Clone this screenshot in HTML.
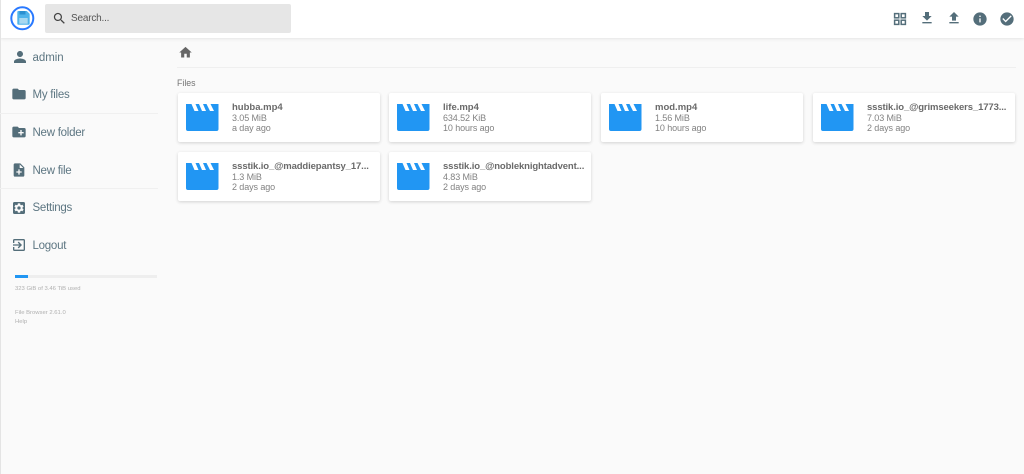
<!DOCTYPE html>
<html><head><meta charset="utf-8"><style>
*{box-sizing:border-box;margin:0;padding:0}
html,body{width:1024px;height:474px;overflow:hidden;background:#fafafa;font-family:"Liberation Sans",sans-serif}
#w{position:absolute;left:0;top:0;width:1024px;height:474px;background:#fafafa;filter:blur(.35px)}
.abs{position:absolute}
#top{left:0;top:0;width:1024px;height:38px;background:#fff;box-shadow:0 0 4px rgba(0,0,0,.14)}
#edge{left:0;top:0;width:1px;height:474px;background:#e4e4e4}
#search{left:45px;top:4px;width:246px;height:29px;background:#e6e6e6;border-radius:2px}
#stxt{left:71px;top:12px;font-size:10px;line-height:13px;color:#555;letter-spacing:-.2px}
.nav{left:32.5px;font-size:11.5px;line-height:14px;color:#5d7682;letter-spacing:-.25px;white-space:nowrap}
.hr{left:0;width:158px;height:1px;background:#f0f0f0}
.card{position:absolute;width:202px;height:49px;background:#fff;border-radius:2px;box-shadow:0 1px 3px rgba(0,0,0,.16)}
.card svg{position:absolute;left:8px;top:11px}
.n{position:absolute;left:54px;top:8.5px;font-size:9.5px;line-height:12px;font-weight:bold;color:#6a6a6a;white-space:nowrap}
.l{letter-spacing:-.12px}
.s,.d{position:absolute;left:54px;font-size:9px;line-height:11px;color:#828282;white-space:nowrap;letter-spacing:-.1px}
.s{top:19.5px}.d{top:30px}
.tiny{font-size:5.9px;line-height:8px;color:#b0b0b0;white-space:nowrap}
svg{display:block}
</style></head><body><div id="w">
<div class="abs" id="top"></div>
<div class="abs" id="edge"></div>

<svg class="abs" style="left:10px;top:6px" width="25" height="25" viewBox="0 0 25 25">
<circle cx="12.3" cy="12.3" r="11" fill="#fff" stroke="#2979ff" stroke-width="2"/>
<path d="M7.3 6a1 1 0 0 1 1-1h8.5l2.900 2.900v9.800a1 1 0 0 1-1 1H8.300a1 1 0 0 1-1-1z" fill="#4fb3ea"/>
<rect x="9.5" y="5" width="6" height="3.5" fill="#2a8fd0"/>
<rect x="9.3" y="12" width="8.4" height="5.7" fill="#a8d8f0"/>
</svg>

<div class="abs" id="search"></div>
<svg class="abs" style="left:51.5px;top:10.5px" width="15" height="15" viewBox="0 0 24 24"><path fill="#444" d="M15.5 14h-.79l-.28-.27C15.41 12.59 16 11.11 16 9.5 16 5.91 13.09 3 9.5 3S3 5.91 3 9.500 5.910 16 9.500 16c1.610 0 3.090-.59 4.230-1.570l.27.28v.79l5 4.990L20.490 19l-4.990-5zm-6 0C7.010 14 5 11.990 5 9.500S7.010 5 9.500 5 14 7.010 14 9.500 11.990 14 9.500 14z"/></svg>
<div class="abs" id="stxt">Search...</div>

<svg class="abs" style="left:893px;top:11.5px" width="14" height="14" viewBox="0 0 14 14"><g fill="none" stroke="#546e7a" stroke-width="1.5"><rect x="1.6" y="1.6" width="4.2" height="4.2"/><rect x="8.2" y="1.6" width="4.2" height="4.2"/><rect x="1.6" y="8.2" width="4.2" height="4.2"/><rect x="8.2" y="8.2" width="4.2" height="4.2"/></g></svg>
<svg class="abs" style="left:919px;top:10px" width="16" height="16" viewBox="0 0 24 24"><path fill="#546e7a" d="M19 9h-4V3H9v6H5l7 7 7-7zM5 18v2h14v-2H5z"/></svg>
<svg class="abs" style="left:946px;top:10px" width="16" height="16" viewBox="0 0 24 24"><path fill="#546e7a" d="M9 16h6v-6h4l-7-7-7 7h4zm-4 2h14v2H5z"/></svg>
<svg class="abs" style="left:972px;top:10.5px" width="16" height="16" viewBox="0 0 24 24"><path fill="#546e7a" d="M12 2C6.48 2 2 6.48 2 12s4.48 10 10 10 10-4.48 10-10S17.52 2 12 2zm1 15h-2v-6h2v6zm0-8h-2V7h2v2z"/></svg>
<svg class="abs" style="left:998.5px;top:10.5px" width="16" height="16" viewBox="0 0 24 24"><path fill="#546e7a" d="M12 2C6.48 2 2 6.48 2 12s4.48 10 10 10 10-4.48 10-10S17.52 2 12 2zm-2 15l-5-5 1.41-1.41L10 14.17l7.59-7.59L19 8l-9 9z"/></svg>

<svg class="abs" style="left:10.5px;top:48px" width="18" height="18" viewBox="0 0 24 24"><path fill="#546e7a" d="M12 12c2.21 0 4-1.79 4-4s-1.79-4-4-4-4 1.79-4 4 1.79 4 4 4zm0 2c-2.67 0-8 1.34-8 4v2h16v-2c0-2.66-5.33-4-8-4z"/></svg>
<div class="abs nav" style="top:50.5px;letter-spacing:-.05px">admin</div>
<svg class="abs" style="left:11px;top:86px" width="16" height="16" viewBox="0 0 24 24"><path fill="#546e7a" d="M10 4H4c-1.1 0-2 .9-2 2v12c0 1.1.9 2 2 2h16c1.1 0 2-.9 2-2V8c0-1.1-.9-2-2-2h-8l-2-2z"/></svg>
<div class="abs nav" style="top:88px">My files</div>
<div class="abs hr" style="top:113px"></div>
<svg class="abs" style="left:11px;top:124px" width="16" height="16" viewBox="0 0 24 24"><path fill="#546e7a" d="M20 6h-8l-2-2H4c-1.11 0-2 .89-2 2v12c0 1.11.89 2 2 2h16c1.11 0 2-.89 2-2V8c0-1.11-.89-2-2-2zm-1 8h-3v3h-2v-3h-3v-2h3V9h2v3h3v2z"/></svg>
<div class="abs nav" style="top:126px">New folder</div>
<svg class="abs" style="left:11px;top:162px" width="16" height="16" viewBox="0 0 24 24"><path fill="#546e7a" d="M14 2H6c-1.1 0-2 .9-2 2v16c0 1.1.9 2 2 2h12c1.1 0 2-.9 2-2V8l-6-6zm2 14h-3v3h-2v-3H8v-2h3v-3h2v3h3v2zm-3-7V3.500L18.500 9H13z"/></svg>
<div class="abs nav" style="top:163.5px">New file</div>
<div class="abs hr" style="top:188px"></div>
<svg class="abs" style="left:11px;top:199.5px" width="16" height="16" viewBox="0 0 24 24"><path fill="#546e7a" d="M12 9.500a2.500 2.500 0 1 0 0 5 2.500 2.500 0 0 0 0-5zM19 3H5c-1.100 0-2 .9-2 2v14c0 1.100.9 2 2 2h14c1.100 0 2-.9 2-2V5c0-1.100-.9-2-2-2zm-1.750 9c0 .23-.02.46-.05.68l1.480 1.160c.13.11.17.3.08.45l-1.400 2.420c-.09.15-.27.21-.43.15l-1.740-.7c-.36.28-.76.51-1.180.69l-.26 1.850c-.03.17-.18.3-.35.3h-2.800c-.17 0-.32-.13-.35-.29l-.26-1.850c-.43-.18-.82-.41-1.180-.69l-1.740.7c-.16.06-.34 0-.43-.15l-1.400-2.420c-.09-.15-.05-.34.08-.45l1.480-1.160c-.03-.23-.05-.46-.05-.69 0-.23.02-.46.05-.68l-1.480-1.160c-.13-.11-.17-.3-.08-.45l1.400-2.420c.09-.15.27-.21.43-.15l1.740.7c.36-.28.76-.51 1.180-.69l.26-1.850c.03-.17.18-.3.35-.3h2.800c.17 0 .32.13.35.29l.26 1.850c.43.18.82.41 1.180.69l1.740-.7c.16-.06.34 0 .43.15l1.400 2.420c.09.15.05.34-.08.45l-1.480 1.160c.03.23.05.46.05.69z"/></svg>
<div class="abs nav" style="top:201px">Settings</div>
<svg class="abs" style="left:11px;top:237px" width="16" height="16" viewBox="0 0 24 24"><path fill="#546e7a" d="M10.090 15.590L11.500 17l5-5-5-5-1.410 1.410L12.670 11H3v2h9.670l-2.580 2.590zM19 3H5c-1.110 0-2 .9-2 2v4h2V5h14v14H5v-4H3v4c0 1.100.89 2 2 2h14c1.100 0 2-.9 2-2V5c0-1.100-.9-2-2-2z"/></svg>
<div class="abs nav" style="top:238.5px">Logout</div>

<div class="abs" style="left:15px;top:275px;width:142px;height:3px;background:#eee"></div>
<div class="abs" style="left:15px;top:275px;width:13px;height:3px;background:#2196f3"></div>
<div class="abs tiny" style="left:15px;top:285px">323 GiB of 3.46 TiB used</div>
<div class="abs tiny" style="left:15px;top:309px">File Browser 2.61.0</div>
<div class="abs tiny" style="left:15px;top:318px">Help</div>

<svg class="abs" style="left:177.5px;top:44.5px" width="15" height="15" viewBox="0 0 24 24"><path fill="#666" d="M10 20v-6h4v6h5v-8h3L12 3 2 12h3v8z"/></svg>
<div class="abs" style="left:177px;top:67px;width:839px;height:1px;background:#efefef"></div>
<div class="abs" style="left:177px;top:77px;font-size:8.8px;line-height:12px;color:#757575">Files</div>

<div class="card" style="left:178px;top:93px"><svg width="33" height="27" viewBox="0 0 33 27"><path fill="#2196f3" d="M0 0H5.500L8.500 7H12.500L9.500 0H13L16 7H20L17 0H20.500L24 7H28L24.500 0H32.500V25a2 2 0 0 1-2 2H2a2 2 0 0 1-2-2z"/></svg><div class="n">hubba.mp4</div><div class="s">3.05 MiB</div><div class="d">a day ago</div></div>
<div class="card" style="left:389px;top:93px"><svg width="33" height="27" viewBox="0 0 33 27"><path fill="#2196f3" d="M0 0H5.500L8.500 7H12.500L9.500 0H13L16 7H20L17 0H20.500L24 7H28L24.500 0H32.500V25a2 2 0 0 1-2 2H2a2 2 0 0 1-2-2z"/></svg><div class="n">life.mp4</div><div class="s">634.52 KiB</div><div class="d">10 hours ago</div></div>
<div class="card" style="left:601px;top:93px"><svg width="33" height="27" viewBox="0 0 33 27"><path fill="#2196f3" d="M0 0H5.500L8.500 7H12.500L9.500 0H13L16 7H20L17 0H20.500L24 7H28L24.500 0H32.500V25a2 2 0 0 1-2 2H2a2 2 0 0 1-2-2z"/></svg><div class="n">mod.mp4</div><div class="s">1.56 MiB</div><div class="d">10 hours ago</div></div>
<div class="card" style="left:813px;top:93px"><svg width="33" height="27" viewBox="0 0 33 27"><path fill="#2196f3" d="M0 0H5.500L8.500 7H12.500L9.500 0H13L16 7H20L17 0H20.500L24 7H28L24.500 0H32.500V25a2 2 0 0 1-2 2H2a2 2 0 0 1-2-2z"/></svg><div class="n l">ssstik.io_@grimseekers_1773...</div><div class="s">7.03 MiB</div><div class="d">2 days ago</div></div>
<div class="card" style="left:178px;top:152px"><svg width="33" height="27" viewBox="0 0 33 27"><path fill="#2196f3" d="M0 0H5.500L8.500 7H12.500L9.500 0H13L16 7H20L17 0H20.500L24 7H28L24.500 0H32.500V25a2 2 0 0 1-2 2H2a2 2 0 0 1-2-2z"/></svg><div class="n l">ssstik.io_@maddiepantsy_17...</div><div class="s">1.3 MiB</div><div class="d">2 days ago</div></div>
<div class="card" style="left:389px;top:152px"><svg width="33" height="27" viewBox="0 0 33 27"><path fill="#2196f3" d="M0 0H5.500L8.500 7H12.500L9.500 0H13L16 7H20L17 0H20.500L24 7H28L24.500 0H32.500V25a2 2 0 0 1-2 2H2a2 2 0 0 1-2-2z"/></svg><div class="n l">ssstik.io_@nobleknightadvent...</div><div class="s">4.83 MiB</div><div class="d">2 days ago</div></div>
</div></body></html>
